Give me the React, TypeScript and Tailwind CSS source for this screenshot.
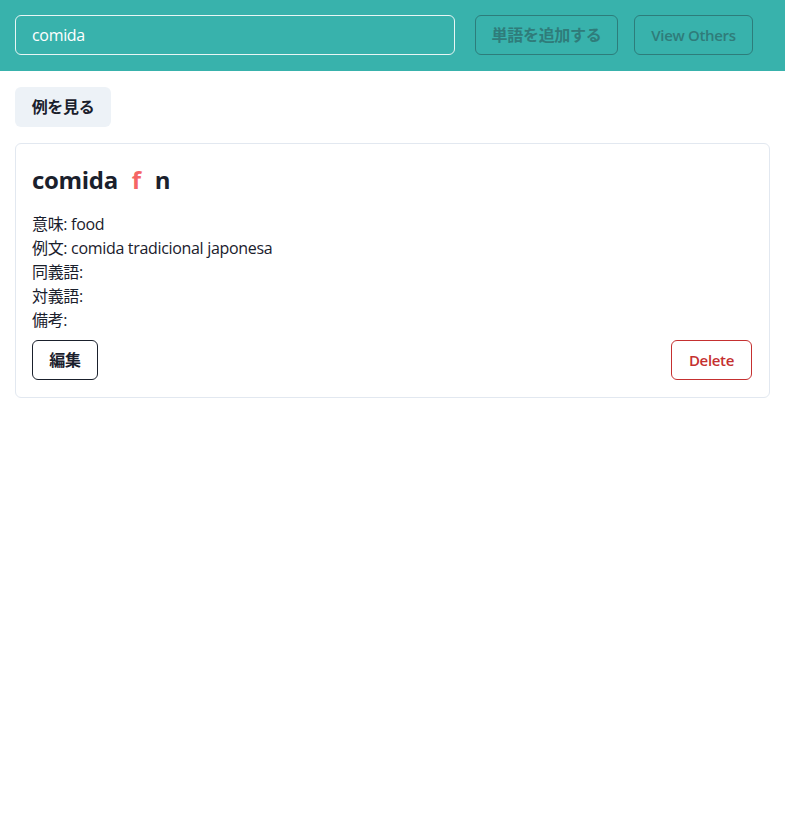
import React from "react";

export default function App() {
  const font = { fontFamily: '"Open Sans", "Noto Sans", "Noto Sans CJK JP", sans-serif' };
  return (
    <div className="min-h-[820px] bg-white text-[#1a202c] tracking-[-0.02em]" style={font}>
      <header className="flex h-[71px] items-start gap-5 bg-[#38b2ac] px-[15px] pt-[15px]">
        <div className="flex h-10 w-[440px] items-center rounded-md border border-[#e8f6f5] px-4 text-base text-white">
          comida
        </div>
        <button className="h-10 w-[143px] rounded-md border border-[#2d7d7b] text-base font-semibold text-[#2f7c7a]">
          単語を追加する
        </button>
        <button className="ml-[-4px] h-10 w-[119px] rounded-md border border-[#2d7d7b] text-[15px] font-semibold text-[#2f7c7a]">
          View Others
        </button>
      </header>
      <main className="flex flex-col gap-4 px-[15px] pt-4">
        <div>
          <button className="h-10 w-24 rounded-md bg-[#edf2f7] text-base font-semibold text-[#1a202c]">
            例を見る
          </button>
        </div>
        <div className="rounded-md border border-[#e2e8f0] p-4">
          <div className="flex items-center gap-[14px] pt-[4px] text-2xl font-bold leading-8">
            <span>comida</span>
            <span className="text-[#f56565]">f</span>
            <span>n</span>
          </div>
          <div className="mt-[16px] text-base leading-6">
            <div>意味: food</div>
            <div>例文: comida tradicional japonesa</div>
            <div>同義語:</div>
            <div>対義語:</div>
            <div>備考:</div>
          </div>
          <div className="mt-2 mb-px flex justify-between pr-px">
            <button className="h-10 w-[66px] rounded-md border border-[#1a202c] text-base font-semibold">
              編集
            </button>
            <button className="h-10 w-[81px] rounded-md border border-[#c53030] text-[15px] font-semibold text-[#c53030]">
              Delete
            </button>
          </div>
        </div>
      </main>
    </div>
  );
}
